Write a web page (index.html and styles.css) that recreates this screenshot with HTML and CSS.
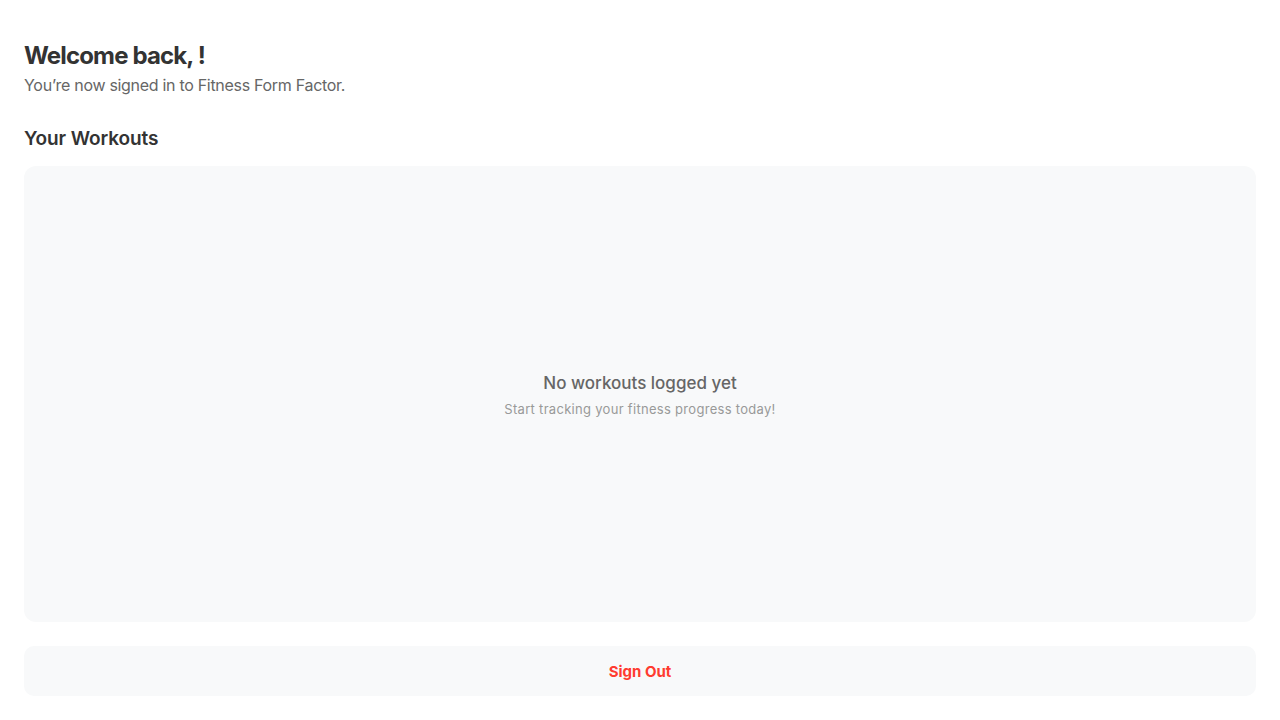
FILE: index.html
```html
<!DOCTYPE html>
<html lang="en">
<head>
<meta charset="utf-8">
<title>Fitness Form Factor</title>
<link rel="stylesheet" href="styles.css">
</head>
<body>
<main class="page">
  <header class="welcome">
    <h1 class="title">Welcome back, !</h1>
    <p class="subtitle">You’re now signed in to Fitness Form Factor.</p>
  </header>
  <h2 class="section-title">Your Workouts</h2>
  <section class="workouts">
    <p class="empty-title">No workouts logged yet</p>
    <p class="empty-text">Start tracking your fitness progress today!</p>
  </section>
  <button class="signout" type="button">Sign Out</button>
</main>
</body>
</html>
```
FILE: styles.css
```css
* { box-sizing: border-box; }
html, body { margin: 0; height: 100%; background: #fff; }
body { font-family: Inter, "Noto Sans", "Liberation Sans", sans-serif; color: #333; }
.page {
  height: 720px;
  padding: 40px 24px 24px;
  display: flex;
  flex-direction: column;
}
.title {
  margin: 0;
  font-size: 24px;
  line-height: 31px;
  font-weight: 700;
  color: #333;
  letter-spacing: -0.85px;
}
.subtitle {
  margin: 3px 0 0;
  font-size: 16px;
  line-height: 22px;
  color: #666;
  letter-spacing: -0.3px;
}
.section-title {
  margin: 30px 0 0;
  font-size: 19px;
  line-height: 25px;
  font-weight: 600;
  color: #333;
  letter-spacing: -0.1px;
}
.workouts {
  margin-top: 15px;
  flex: 1;
  background: #f8f9fa;
  border-radius: 12px;
  display: flex;
  flex-direction: column;
  align-items: center;
  justify-content: center;
}
.empty-title {
  margin: 0;
  font-size: 17px;
  line-height: 22px;
  color: #666;
  font-weight: 500;
}
.empty-text {
  margin: 7px 0 0;
  font-size: 13px;
  line-height: 16px;
  color: #999;
  letter-spacing: 0.3px;
}
.signout {
  margin-top: 24px;
  height: 50px;
  border: 0;
  border-radius: 10px;
  background: #f8f9fa;
  color: #ff3b30;
  font-family: inherit;
  font-size: 15px;
  font-weight: 700;
  cursor: pointer;
}
```
